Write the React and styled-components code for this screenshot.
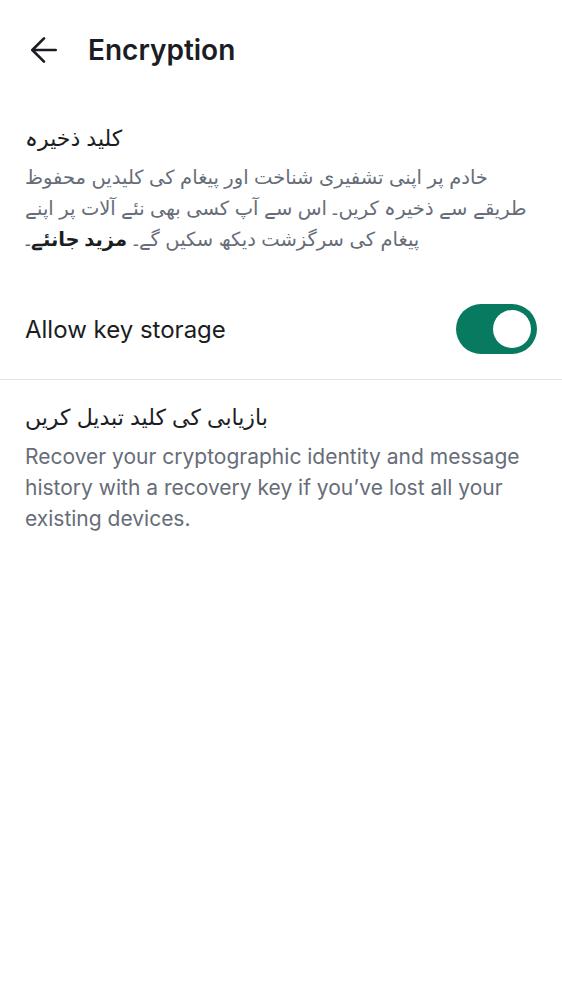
import React from "react";
import styled, { createGlobalStyle } from "styled-components";

const Global = createGlobalStyle`
  html, body { margin: 0; padding: 0; background: #ffffff; }
  body { font-family: Inter, "DejaVu Sans", sans-serif; color: #1b1d22; }
  * { box-sizing: border-box; }
`;

const Page = styled.div`
  width: 562px;
  min-height: 1000px;
  background: #ffffff;
  display: flex;
  flex-direction: column;
`;

const Header = styled.header`
  height: 100px;
  display: flex;
  align-items: center;
  gap: 24px;
  padding: 0 24px;
`;

const BackButton = styled.button`
  width: 40px;
  height: 40px;
  border: 0;
  background: none;
  padding: 0;
  display: flex;
  align-items: center;
  justify-content: center;
  color: #1b1d22;
`;

const Title = styled.h1`
  margin: 0;
  font-size: 28px;
  font-weight: 600;
  color: #1b1d22;
`;

const Section = styled.section`
  display: flex;
  flex-direction: column;
  gap: 8px;
  padding: ${(p) => p.$pad || "22px 24px 0 25px"};
`;

const SectionTitle = styled.div`
  font-size: ${(p) => (p.$urdu ? "22px" : "24px")};
  line-height: 32px;
  color: #1b1d22;
`;

const Body = styled.p`
  margin: 0;
  font-size: ${(p) => (p.$urdu ? "19.5px" : "21px")};
  line-height: 31px;
  color: #666d78;
`;

const Stop = styled.span`
  display: inline;
  margin: 0 -3px 0 -3px;
`;

const Link = styled.a`
  color: #1b1d22;
  font-weight: 700;
  text-decoration: none;
`;

const ToggleRow = styled.div`
  display: flex;
  align-items: center;
  justify-content: space-between;
  padding: 0 25px 0 25px;
  height: 101px;
  margin-top: 24px;
  border-bottom: 1px solid #e1e3e8;
`;

const RowLabel = styled.span`
  font-size: 24px;
  color: #1b1d22;
`;

const Switch = styled.button`
  width: 81px;
  height: 50px;
  border-radius: 25px;
  border: 0;
  padding: 0 6px;
  background: ${(p) => (p.$on ? "#087a5f" : "#cdd0d6")};
  display: flex;
  align-items: center;
  justify-content: ${(p) => (p.$on ? "flex-end" : "flex-start")};
`;

const Knob = styled.span`
  width: 38px;
  height: 38px;
  border-radius: 50%;
  background: #ffffff;
`;

export default function App() {
  return (
    <Page>
      <Global />
      <Header>
        <BackButton aria-label="Back">
          <svg width="28" height="28" viewBox="0 0 24 24" fill="none" stroke="currentColor" strokeWidth="2.3" strokeLinecap="round" strokeLinejoin="round">
            <path d="M22 12H2.5" />
            <path d="M12 2 2 12l10 10" />
          </svg>
        </BackButton>
        <Title>Encryption</Title>
      </Header>
      <Section>
        <SectionTitle $urdu>کلید ذخیرہ</SectionTitle>
        <Body $urdu>
          خادم پر اپنی تشفیری شناخت اور پیغام کی کلیدیں محفوظ طریقے سے ذخیرہ کریں<Stop>۔</Stop> اس سے آپ کسی بھی نئے آلات پر اپنے پیغام کی سرگزشت دیکھ سکیں گے<Stop>۔</Stop>{" "}
          <Link href="#">مزید جانئے</Link><Stop>۔</Stop>
        </Body>
      </Section>
      <ToggleRow>
        <RowLabel>Allow key storage</RowLabel>
        <Switch $on aria-label="Allow key storage">
          <Knob />
        </Switch>
      </ToggleRow>
      <Section $pad="21px 24px 0 25px">
        <SectionTitle $urdu>بازیابی کی کلید تبدیل کریں</SectionTitle>
        <Body>
          Recover your cryptographic identity and message history with a recovery key if you’ve lost all your existing devices.
        </Body>
      </Section>
    </Page>
  );
}
